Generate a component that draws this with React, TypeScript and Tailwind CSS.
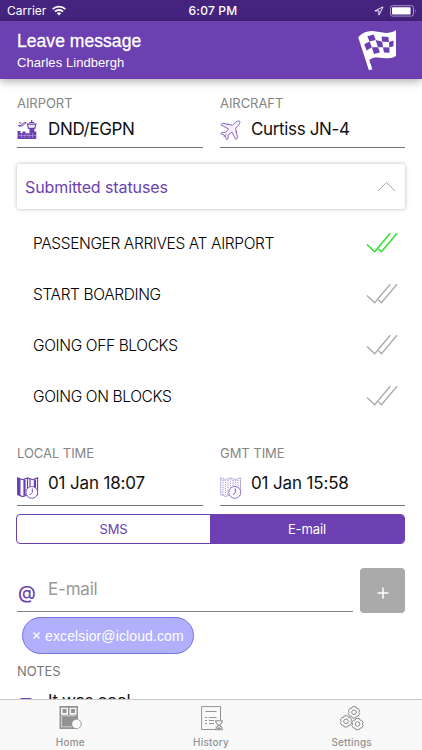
import type { ReactNode } from 'react';

const sf = "font-[Inter,'Liberation_Sans',sans-serif]";
const helv = "font-['Liberation_Sans',Arial,sans-serif]";

function Wifi() {
  return (
    <svg width="14" height="11" viewBox="0 0 14 11" fill="none" stroke="#fff" strokeWidth="1.8">
      <path d="M.7 4.1a9 9 0 0 1 12.6 0" />
      <path d="M3 6.6a5.8 5.8 0 0 1 8 0" />
      <path d="M7 10.6 4.8 8.3a3.2 3.2 0 0 1 4.4 0Z" fill="#fff" stroke="none" />
    </svg>
  );
}

function Location() {
  return (
    <svg width="10" height="10" viewBox="0 0 10 10" fill="none" stroke="#f0eaf8" strokeWidth="1">
      <path d="M9 .9.9 4.9h4v4.2Z" strokeLinejoin="round" />
    </svg>
  );
}

function Battery() {
  return (
    <svg width="27" height="12" viewBox="0 0 27 12">
      <rect x=".5" y=".7" width="23" height="10.4" rx="2" fill="none" stroke="#a593c5" />
      <rect x="2" y="2.2" width="18.6" height="7.4" rx=".8" fill="#fff" />
      <path d="M25 4.2q1.5 1.7 0 3.4Z" fill="#a593c5" />
    </svg>
  );
}

function Flag() {
  return (
    <svg width="40" height="42" viewBox="0 0 40 42">
      <path
        d="M.2 8.200C4 3.700 9.500 1.700 14.500 2.100C22 2.600 30 6.600 38 1V26.800C32 31.500 24.500 27.700 17.500 28.500C14.500 28.800 12.700 29.800 11.300 31L14.400 40.200L10.900 41.300Z"
        fill="#fff"
      />
      <g fill="#6c40b0">
        <path d="m9.300 7.200 6.400-1.600 2 5.500-6.100 1.500Z" />
        <path d="m23.600 7.600 6.800.5.600 5-6.800-.3Z" />
        <path d="m6.200 15.300 5.400-2.700 2.300 5.600-5.300 3.200Z" />
        <path d="m17.700 11.100 6.500 1.700.8 5.400-5 .1Z" />
        <path d="m31 13.100 4.500-1.700v5.900l-4.200 1.300Z" />
        <path d="m13.900 18.200 6.100.1 1.900 5.100-6 1.500Z" />
        <path d="m25 18.200 6.300.4.200 5.200-5.500-.2Z" />
      </g>
    </svg>
  );
}

function Tower() {
  return (
    <svg width="20" height="20" viewBox="0 0 20 20" fill="none">
      <path d="M1.200 5.500h2.500l3.700-3h1.900L6.200 5.200l-1 .8H1.800ZM2 2.700l2.500.5" stroke="#6c40b0" strokeWidth="1" />
      <path d="M14.700 0v3M12.200 2.500h5M10.500 4.200h8.300l-1 4.200h-6.300Z" stroke="#6c40b0" strokeWidth="1.200" />
      <path d="M12.500 8.500h4.800v3h2V19H.5v-8h3v2h2v-1.500h3v1.800h4Z" fill="#6c40b0" />
      <path d="M1 15.500h18M4.500 13v5M8 14v4M12 14v4M15.500 13v5M13.500 5v3M16 5v3" stroke="#b9a4da" strokeWidth=".6" />
    </svg>
  );
}

function Plane() {
  return (
    <svg width="21" height="21" viewBox="0 0 21 21" fill="#f5f0fb" stroke="#8c6ac6" strokeWidth="1" strokeLinejoin="round">
      <path d="M19.700 1.200c-1.300-.7-3.400.4-4.500 1.500L12.400 5.200 2.500 3.200.9 4.900l7.700 4-3.300 3.700-3.200-.4L.8 13.500l4 2.100 2 4 1.400-1.200-.2-3.200 3.900-3.100 4 7.500 1.700-1.700-2-9.700 2.600-2.600c1-1 2.200-3.300 1.500-4.400Z" />
      <path d="m7 5.100.8-1 1.300.5M15.500 12l.8-.5.3 1.300M3.500 17.200l2.800-2.800" fill="none" />
    </svg>
  );
}

function MapClock({ solid = false }: { solid?: boolean }) {
  const ink = solid ? '#6c40b0' : '#9b82c8';
  return (
    <svg width="22" height="22" viewBox="0 0 22 22" fill="none" stroke={ink}>
      <path
        d="M.7.9 5.500 2.700 10.500.9l5 1.800L20.500.9v17l-5 1.600-5-1.600-5 1.600L.7 17.500Z"
        fill={solid ? '#fff' : '#faf8fd'}
        strokeWidth={solid ? '1.2' : '.9'}
        strokeDasharray={solid ? undefined : '1.5 .6'}
      />
      {solid ? (
        <>
          <path d="M2 2v16" strokeWidth="3" />
          <path d="M7.500 2.600v15.900M17.900 2.500v10" strokeWidth="2.200" />
          <path d="M10.500 1v17M13 2v8" strokeWidth="1.200" />
        </>
      ) : (
        <>
          <path d="M3 3v15M8 3v15M13 3v8M18 3v7" strokeWidth="1" strokeDasharray="1 1.300" />
          <path d="M5.500 3v15M10.500 2v15M15.500 3v8" strokeWidth=".7" strokeDasharray="1 1" />
        </>
      )}
      <circle cx="14.800" cy="15.400" r="5.900" fill="#fff" stroke={solid ? '#8059bd' : '#9174c3'} strokeWidth="1" />
      <path d="M15.300 11.500v4l-2.500 2.500" stroke="#7650b6" strokeWidth="1" />
    </svg>
  );
}

function DoubleCheck({ color }: { color: string }) {
  return (
    <svg width="32" height="22" viewBox="0 0 32 22" fill="none" stroke={color} strokeWidth="1.350">
      <path d="m1 12.400 7.700 7.400L24.200 1.200" />
      <path d="m12.500 16.800 3 3L31 1.200" />
    </svg>
  );
}

function HomeIcon() {
  return (
    <svg width="23" height="24" viewBox="0 0 23 24">
      <path d="M.5 0h18.500v23H.5Z" fill="#929292" />
      <path d="M2 1.700h7v7H2ZM10.500 1.700h7v7h-7Z" fill="#f8f8f8" />
      <path d="M3.500 3.100h4v4h-4ZM12 3.100h4v4h-4Z" fill="#929292" />
      <path d="M2.500 9.800h14M2.500 10v11M2 20.800h11" fill="none" stroke="#d8d8d8" strokeWidth=".9" />
      <circle cx="17.500" cy="18" r="4.700" fill="#f9f9f9" stroke="#929292" strokeWidth="1" strokeDasharray="2 .7" />
    </svg>
  );
}

function HistoryIcon() {
  return (
    <svg className="ml-[3px]" width="24" height="25" viewBox="0 0 24 25" fill="none" stroke="#929292">
      <path d="M14 23.500H.6V.6h18.900v13.500" strokeWidth="1" />
      <path d="M4.500 5.500h11M4 11.500h2M8 11.500h7.500M4 14.500h2M8 14.500h5M4 17.500h2M8 17.500h5" strokeWidth="1.100" />
      <path d="M14 14.800h8M14 23.700h8M15 15v1.500l2.500 2.700L15 22v1.700M21 15v1.500l-2.500 2.700L21 22v1.700" strokeWidth="1.100" />
      <path d="M15.500 23h5L18 20.700Z" fill="#929292" stroke="none" />
    </svg>
  );
}

function Gear({ x, y }: { x: number; y: number }) {
  return (
    <g transform={`translate(${x} ${y})`}>
      <path d="m-1.700-5.500 3.400 0 .7 1.600 1.800.2 1.500 2.500-1 1.200 1 1.400L4.200 4l-1.800.1-.7 1.600h-3.400l-.7-1.600L-4.200 4l-1.500-2.600 1-1.400-1-1.200 1.500-2.500 1.800-.2Z" />
      <circle r="2.300" />
    </g>
  );
}

function SettingsIcon() {
  return (
    <svg width="24" height="25" viewBox="0 0 24 25" fill="none" stroke="#8c8c8c" strokeWidth="1">
      <Gear x={14} y={6.200} />
      <Gear x={6} y={15.300} />
      <Gear x={17.500} y={18} />
    </svg>
  );
}

function Field({ label, icon, value, time = false }: { label: string; icon: ReactNode; value: string; time?: boolean }) {
  return (
    <div>
      <div className="h-4 text-[13px] leading-4 tracking-[-0.05px] text-[#858585]">{label}</div>
      <div className={`flex border-b border-[#737373] ${time ? 'h-[45px]' : 'h-[37px]'}`}>
        <div className={`w-[31px] ${time ? 'pt-4' : 'pt-[9px]'}`}>{icon}</div>
        <div className={`text-[17px] leading-[22px] whitespace-nowrap text-[#111] ${time ? 'pt-[11px] tracking-[-0.15px]' : 'pt-[7px] tracking-[-0.35px]'}`}>{value}</div>
      </div>
    </div>
  );
}

const statuses = [
  { name: 'PASSENGER ARRIVES AT AIRPORT', color: '#1ee51e' },
  { name: 'START BOARDING', color: '#aaa' },
  { name: 'GOING OFF BLOCKS', color: '#aaa' },
  { name: 'GOING ON BLOCKS', color: '#aaa' },
];

function Tab({ icon, label }: { icon: ReactNode; label: string }) {
  return (
    <div className="flex flex-1 flex-col items-center pt-[6px]">
      <div className="h-[30px]">{icon}</div>
      <div className="text-[10px] leading-3 font-medium tracking-[0.2px] text-[#929292]">{label}</div>
    </div>
  );
}

export default function App() {
  return (
    <div className={`flex h-[750px] w-[422px] flex-col overflow-hidden bg-white ${sf}`}>
      <div className="grid h-[21px] shrink-0 grid-cols-3 items-center bg-[#45247f] text-white">
        <div className="flex items-center gap-[6px] pl-[7px] text-[12px] leading-5">
          <span>Carrier</span>
          <Wifi />
        </div>
        <div className="pl-1 text-center text-[12px] leading-5 font-medium tracking-[0.2px]">6:07 PM</div>
        <div className="flex items-center justify-end gap-[6px] pr-[5px]">
          <Location />
          <Battery />
        </div>
      </div>

      <header className={`z-10 flex h-[58px] shrink-0 justify-between bg-[#6c40b0] pr-6 pl-[17px] text-white shadow-[0_2px_9px_rgba(0,0,0,0.35)] ${helv}`}>
        <div className="pt-[9px]">
          <div className="text-[17.5px] leading-[22px] tracking-[0.050px] [-webkit-text-stroke:0.3px_white]">Leave message</div>
          <div className="pt-[2px] text-[13px] leading-[18px] tracking-[0.060px]">Charles Lindbergh</div>
        </div>
        <div className="pt-2">
          <Flag />
        </div>
      </header>

      <main className="min-h-0 flex-1 overflow-hidden px-[17px] pt-4">
        <div className="grid grid-cols-[186px_185px] justify-between">
          <Field label="AIRPORT" icon={<Tower />} value="DND/EGPN" />
          <Field label="AIRCRAFT" icon={<Plane />} value="Curtiss JN-4" />
        </div>

        <div className="mt-4 flex h-[45px] items-center justify-between rounded-[3px] bg-white pr-[9px] pl-2 shadow-[0_0_4px_rgba(0,0,0,0.28)]">
          <span className="text-[16px] tracking-[-0.1px] text-[#6c40b0]">Submitted statuses</span>
          <svg width="19" height="11" viewBox="0 0 19 11" fill="none" stroke="#aaa">
            <path d="m1 10 8.500-8.500L18 10" />
          </svg>
        </div>

        <div className="pt-2 pr-[7px] pl-4">
          {statuses.map((s) => (
            <div key={s.name} className="flex h-[51px] items-center justify-between">
              <span className="pt-[2px] text-[15.5px] font-light tracking-[-0.37px] text-black">{s.name}</span>
              <DoubleCheck color={s.color} />
            </div>
          ))}
        </div>

        <div className="mt-6 grid grid-cols-[186px_185px] justify-between">
          <Field label="LOCAL TIME" icon={<MapClock solid />} value="01 Jan 18:07" time />
          <Field label="GMT TIME" icon={<MapClock />} value="01 Jan 15:58" time />
        </div>

        <div className="-ml-px mt-2 grid h-[30px] grid-cols-[193px_1fr] overflow-hidden rounded-[4px] border border-[#6c40b0] text-center text-[13px] leading-7 tracking-[-0.1px]">
          <div className="text-[#6c40b0]">SMS</div>
          <div className="bg-[#6c40b0] text-white">E-mail</div>
        </div>

        <div className="mt-6 flex justify-between">
          <div className="flex h-[44px] w-[336px] border-b border-[#858585]">
            <span className="w-[31px] pt-[14px] pl-[1px] text-[18px] leading-[22px] font-medium text-[#6c40b0]">@</span>
            <span className="pt-[10px] text-[17px] leading-[22px] tracking-[-0.2px] text-[#999]">E-mail</span>
          </div>
          <button className="flex h-[45px] w-[45px] items-center justify-center rounded-[4px] bg-[#aaa] pt-1">
            <svg width="12" height="12" viewBox="0 0 12 12" stroke="#fff" strokeWidth="1.500">
              <path d="M6 .5v11M.5 6h11" />
            </svg>
          </button>
        </div>

        <div className={`mt-1 ml-[5px] flex h-[37px] w-[172px] items-center rounded-full border border-[#7571df] bg-[#b1b0fc] pl-[9px] text-white ${helv}`}>
          <svg width="9" height="9" viewBox="0 0 9 9" stroke="#fff" strokeWidth="1.200">
            <path d="m1.500 1.500 6 6m0-6-6 6" />
          </svg>
          <span className="pt-px pl-1 text-[14px] tracking-[0.120px] whitespace-nowrap">excelsior@icloud.com</span>
        </div>

        <div className="mt-[9px] h-4 text-[13px] leading-4 tracking-[-0.1px] text-[#777]">NOTES</div>
        <div className="flex">
          <div className="w-[31px] pt-[19px] pl-[3px]">
            <div className="h-4 w-[12px] rounded-[2px] bg-[#6c40b0]" />
          </div>
          <div className="pt-[11px] text-[17px] leading-[22px] tracking-[-0.4px] text-[#111]">It was cool</div>
        </div>
      </main>

      <nav className="flex h-[51px] shrink-0 border-t border-[#c8c8ca] bg-[#f9f9fa]">
        <Tab icon={<HomeIcon />} label="Home" />
        <Tab icon={<HistoryIcon />} label="History" />
        <Tab icon={<SettingsIcon />} label="Settings" />
      </nav>
    </div>
  );
}
